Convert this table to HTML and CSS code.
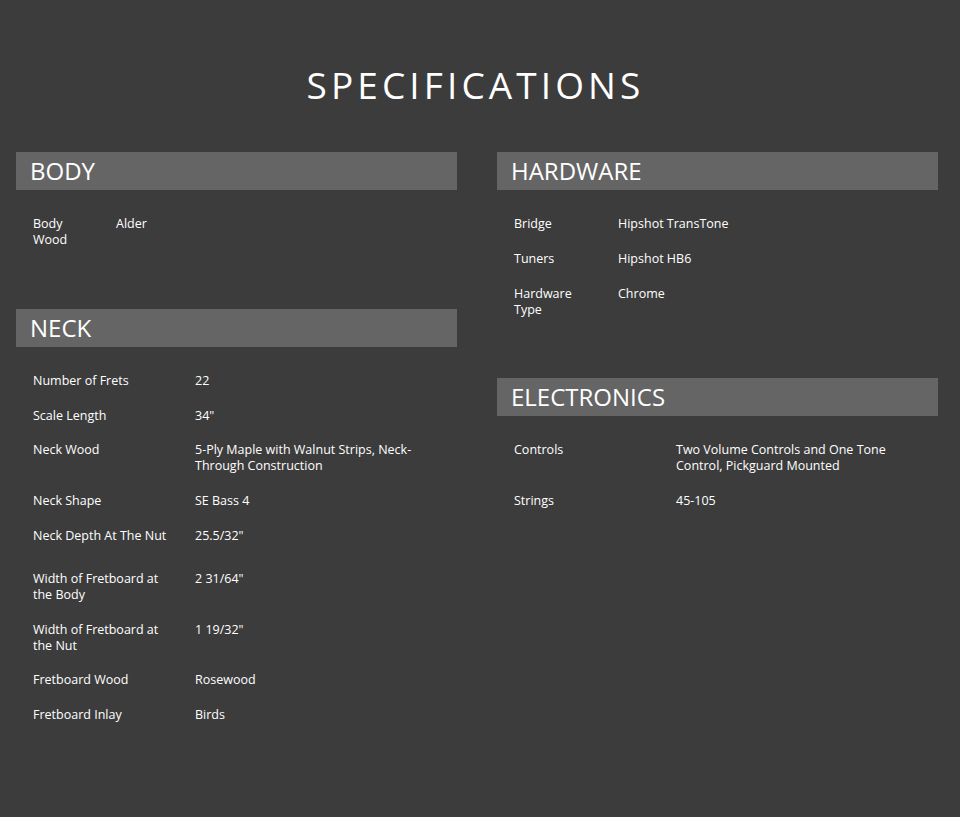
FILE: index.html
```html
<!DOCTYPE html>
<html>
<head>
<meta charset="utf-8">
<link rel="stylesheet" href="styles.css">
</head>
<body>
<main class="page">
  <h1 class="title">SPECIFICATIONS</h1>
  <div class="columns">
    <div class="col">
      <section class="section">
        <h2 class="bar">BODY</h2>
        <div class="specs specs-body">
          <div class="row"><div class="label">Body<br>Wood</div><div class="value">Alder</div></div>
        </div>
      </section>
      <section class="section">
        <h2 class="bar">NECK</h2>
        <div class="specs specs-wide">
          <div class="row"><div class="label">Number of Frets</div><div class="value">22</div></div>
          <div class="row"><div class="label">Scale Length</div><div class="value">34"</div></div>
          <div class="row"><div class="label">Neck Wood</div><div class="value">5-Ply Maple with Walnut Strips, Neck-<br>Through Construction</div></div>
          <div class="row"><div class="label">Neck Shape</div><div class="value">SE Bass 4</div></div>
          <div class="row row-tall"><div class="label">Neck Depth At The Nut</div><div class="value">25.5/32"</div></div>
          <div class="row"><div class="label">Width of Fretboard at<br>the Body</div><div class="value">2 31/64"</div></div>
          <div class="row"><div class="label">Width of Fretboard at<br>the Nut</div><div class="value">1 19/32"</div></div>
          <div class="row"><div class="label">Fretboard Wood</div><div class="value">Rosewood</div></div>
          <div class="row"><div class="label">Fretboard Inlay</div><div class="value">Birds</div></div>
        </div>
      </section>
    </div>
    <div class="col">
      <section class="section">
        <h2 class="bar">HARDWARE</h2>
        <div class="specs specs-hw">
          <div class="row"><div class="label">Bridge</div><div class="value">Hipshot TransTone</div></div>
          <div class="row"><div class="label">Tuners</div><div class="value">Hipshot HB6</div></div>
          <div class="row"><div class="label">Hardware<br>Type</div><div class="value">Chrome</div></div>
        </div>
      </section>
      <section class="section">
        <h2 class="bar">ELECTRONICS</h2>
        <div class="specs specs-wide">
          <div class="row"><div class="label">Controls</div><div class="value">Two Volume Controls and One Tone<br>Control, Pickguard Mounted</div></div>
          <div class="row"><div class="label">Strings</div><div class="value">45-105</div></div>
        </div>
      </section>
    </div>
  </div>
</main>
</body>
</html>
```
FILE: styles.css
```css
html, body {
  margin: 0;
  padding: 0;
  background: #3c3c3c;
}
body {
  font-family: "Open Sans", "Noto Sans", sans-serif;
  color: #fff;
  width: 960px;
  height: 817px;
  overflow: hidden;
}
.page {
  padding-top: 60px;
}
.title {
  margin: 0;
  text-align: center;
  font-size: 37px;
  font-weight: 500;
  letter-spacing: 4.1px;
  line-height: 50px;
  padding-right: 9px;
}
.columns {
  margin-top: 42px;
  padding-left: 16px;
  display: grid;
  grid-template-columns: 441px 441px;
  column-gap: 40px;
}
.section {
  margin-bottom: 51px;
}
.bar {
  margin: 0;
  height: 38px;
  background: #656565;
  font-size: 24px;
  font-weight: 500;
  line-height: 38px;
  padding-left: 14px;
}
.specs {
  margin-top: 17px;
  padding-left: 17px;
  font-size: 12.5px;
  font-weight: 500;
  line-height: 16px;
}
.row {
  display: grid;
  padding: 9px 0 9.75px;
}
.specs-body .row { grid-template-columns: 83px 1fr; }
.specs-wide .row { grid-template-columns: 162px 1fr; }
.specs-hw .row { grid-template-columns: 104px 1fr; }
.row-tall {
  padding-bottom: 18px;
}
```
